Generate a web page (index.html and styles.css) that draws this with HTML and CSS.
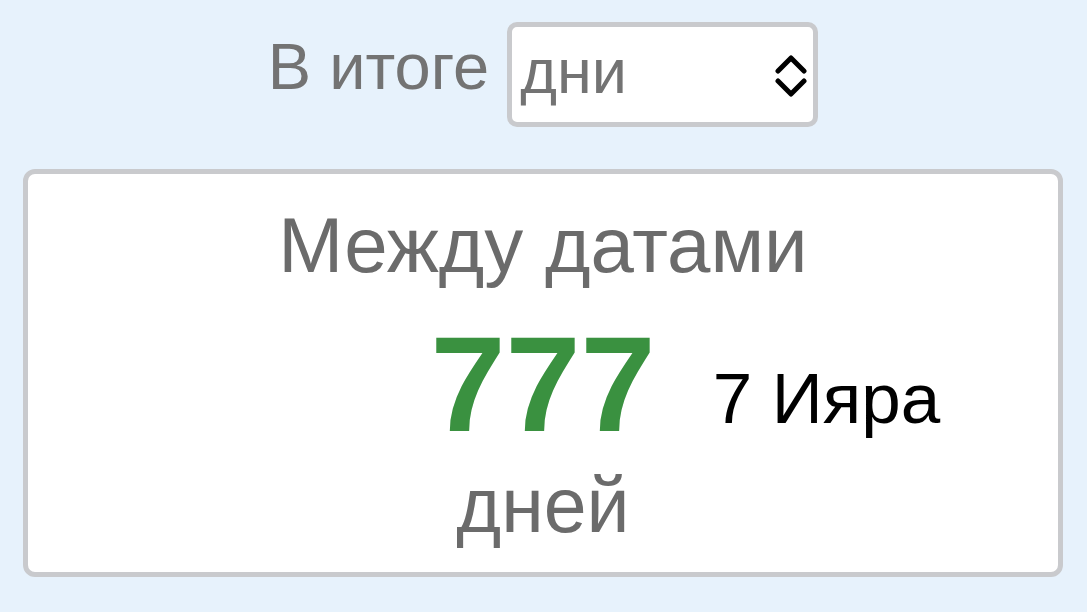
FILE: index.html
```html
<!DOCTYPE html>
<html lang="ru">
<head>
<meta charset="utf-8">
<title>Между датами</title>
<link rel="stylesheet" href="styles.css">
</head>
<body>
  <div class="units">
    <label class="units-label" for="unit">В итоге</label>
    <div class="picker">
      <select id="unit" class="picker-select">
        <option>дни</option>
        <option>недели</option>
        <option>месяцы</option>
        <option>годы</option>
      </select>
      <svg class="picker-arrows" viewBox="0 0 32 42" aria-hidden="true">
        <polyline points="3,16 16,3 29,16"/>
        <polyline points="3,26 16,39 29,26"/>
      </svg>
    </div>
  </div>

  <section class="result">
    <h2 class="result-title">Между датами</h2>
    <div class="result-row">
      <span class="result-number">777</span>
      <span class="result-side">7 Ияра</span>
    </div>
    <div class="result-unit">дней</div>
  </section>
</body>
</html>
```

FILE: styles.css
```css
html, body {
  margin: 0;
  padding: 0;
}

body {
  background: #e7f2fc;
  font-family: "Liberation Sans", Arial, sans-serif;
  padding: 22px 24px 35px 23px;
  height: 612px;
  box-sizing: border-box;
}

/* unit chooser row */
.units {
  display: flex;
  justify-content: center;
  align-items: center;
  gap: 18px;
}

.units-label {
  font-size: 65px;
  color: #737373;
  padding-bottom: 16px;
}

.picker {
  position: relative;
  width: 311px;
  height: 105px;
}

.picker-select {
  appearance: none;
  -webkit-appearance: none;
  width: 100%;
  height: 100%;
  box-sizing: border-box;
  border: 5px solid #c9cacd;
  border-radius: 10px;
  background: #ffffff;
  font-family: inherit;
  font-size: 63px;
  color: #737373;
  padding: 0 0 8px 8px;
  margin: 0;
  outline: none;
}

.picker-arrows {
  position: absolute;
  left: 268px;
  top: 33px;
  width: 32px;
  height: 42px;
  fill: none;
  stroke: #000;
  stroke-width: 5;
  stroke-linecap: round;
  stroke-linejoin: round;
  pointer-events: none;
}

/* result card */
.result {
  margin-top: 42px;
  background: #ffffff;
  border: 5px solid #c9cacd;
  border-radius: 12px;
  padding: 26px 0 23px;
  text-align: center;
}

.result-title {
  margin: 0;
  font-size: 78px;
  line-height: 90px;
  font-weight: normal;
  color: #6b6b6b;
}

.result-row {
  display: grid;
  grid-template-columns: 1fr auto 1fr;
  margin-top: 20px;
}

.result-number {
  grid-column: 2;
  font-size: 135px;
  line-height: 150px;
  font-weight: bold;
  color: #3a9140;
}

.result-side {
  grid-column: 3;
  justify-self: start;
  align-self: start;
  margin: 48px 0 0 57px;
  font-size: 71px;
  line-height: 82px;
  color: #000;
}

.result-unit {
  margin-top: 1px;
  font-size: 77px;
  line-height: 88px;
  color: #6b6b6b;
}
```
